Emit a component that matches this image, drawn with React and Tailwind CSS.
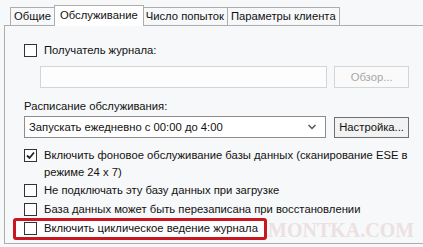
import React from 'react';

const tabs = ['Общие', 'Обслуживание', 'Число попыток', 'Параметры клиента'];

function Check({ checked }) {
  return (
    <span className="w-[13px] h-[13px] shrink-0 border border-[#333] bg-white flex items-center justify-center">
      {checked && (
        <svg width="9" height="9" viewBox="0 0 9 9">
          <path d="M1 4.5 L3.5 7 L8 1.5" fill="none" stroke="#222" strokeWidth="1.8" />
        </svg>
      )}
    </span>
  );
}

function Row({ checked, children, className = '' }) {
  return (
    <div className={`flex items-start gap-[7px] ${className}`}>
      <span className="pt-[1px]"><Check checked={checked} /></span>
      <span className="leading-[17px] -mt-[1px]">{children}</span>
    </div>
  );
}

export default function App() {
  return (
    <div
      className="relative w-[423px] h-[247px] overflow-hidden bg-[#f7f8f9] text-[11.25px] text-[#111]"
      style={{ fontFamily: '"Segoe UI", Tahoma, "Liberation Sans", Arial, sans-serif' }}
    >
      <div
        className="absolute left-[268px] top-[220px] text-[20px] font-bold text-[#ebe1e2] pointer-events-none leading-none"
        style={{ fontFamily: '"Liberation Serif", serif' }}
      >
        MONTKA.COM
      </div>

      {/* Tabs */}
      <div className="flex items-end h-[25px] pl-[10px]">
        {tabs.map((t, i) => (
          <div
            key={t}
            className={
              i === 1
                ? 'relative z-10 h-[21px] -mb-px px-[5px] border border-b-0 border-[#adadad] bg-white flex items-center'
                : 'h-[18px] px-[3px] border border-b-0 border-[#adadad] bg-[#f7f8f9] flex items-center ' + (i > 1 ? '-ml-px' : '') + (i === 2 ? ' border-l-0' : '') + (i === 0 ? ' border-r-0' : '')
            }
          >
            <span className="leading-none">{t}</span>
          </div>
        ))}
      </div>

      {/* Panel */}
      <div className="ml-[4px] w-[440px] h-[219px] border border-[#adadad] pl-[19px] pt-[17px] pr-[34px]">
        <Row>Получатель журнала:</Row>

        <div className="flex gap-[7px] mt-[7px] ml-[16px]">
          <div className="w-[288px] h-[22px] border border-[#d5d5d5] bg-[#fdfdfd]" />
          <div className="w-[75px] h-[22px] border border-[#d5d5d5] bg-[#fafafa] text-[#a8a8a8] flex items-center justify-center">
            Обзор...
          </div>
        </div>

        <div className="mt-[10px] leading-[17px]">Расписание обслуживания:</div>

        <div className="flex gap-[8px] mt-[1px]">
          <div className="w-[303px] h-[22px] border border-[#8c8c8c] bg-white flex items-center justify-between pl-[4px] pr-[9px]">
            <span>Запускать ежедневно с 00:00 до 4:00</span>
            <svg width="8" height="6" viewBox="0 0 8 6">
              <path d="M0.5 1 L4 4.5 L7.5 1" fill="none" stroke="#555" strokeWidth="1.5" />
            </svg>
          </div>
          <div className="w-[75px] h-[21px] mt-[1px] border border-[#707070] bg-[#f2f2f2] flex items-center justify-center">
            Настройка...
          </div>
        </div>

        <Row checked className="mt-[10px] max-w-[390px]">
          Включить фоновое обслуживание базы данных (сканирование ESE в режиме 24 х 7)
        </Row>
        <Row className="mt-[2px]">Не подключать эту базу данных при загрузке</Row>
        <Row className="mt-[3px]">База данных может быть перезаписана при восстановлении</Row>

        <div className="-ml-[11px] mt-[0px] w-[254px] h-[22px] border-[3px] border-[#c9161f] rounded-[3px] bg-[#fdfeff] pl-[8px] flex items-center whitespace-nowrap">
          <Row>Включить циклическое ведение журнала</Row>
        </div>
      </div>
    </div>
  );
}
